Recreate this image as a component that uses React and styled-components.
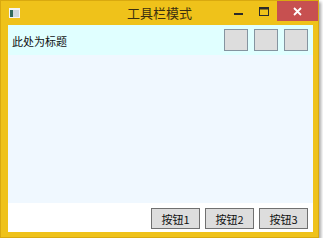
import React from "react";
import styled, { createGlobalStyle } from "styled-components";

const Global = createGlobalStyle`
  html, body { margin: 0; padding: 0; background: #ffffff; }
  body { font-family: "Microsoft YaHei", "Noto Sans CJK SC", sans-serif; }
`;

const Window = styled.div`
  width: 319px;
  height: 238px;
  box-sizing: border-box;
  background: #efc21a;
  border: 1px solid #d9a90f;
  box-shadow: 2px 2px 3px rgba(0,0,0,0.35);
  display: flex;
  flex-direction: column;
`;

const TitleBar = styled.div`
  height: 24px;
  display: flex;
  align-items: flex-start;
  position: relative;
`;

const AppIcon = styled.div`
  width: 9px;
  height: 7px;
  margin: 7px 0 0 8px;
  border: 1px solid #f4f4f4;
  background: linear-gradient(90deg, #2f6a5a 0 3px, #cfd8dc 3px);
  border-top-width: 2px;
`;

const Title = styled.div`
  position: absolute;
  left: 0;
  right: 0;
  top: 3px;
  text-align: center;
  font-family: "Noto Sans CJK SC", sans-serif;
  font-size: 13px;
  line-height: 17px;
  color: #3a2f10;
`;

const Controls = styled.div`
  margin-left: auto;
  display: flex;
  align-items: flex-start;
  position: relative;
  z-index: 1;
`;

const Ctrl = styled.div`
  width: ${(p) => p.w}px;
  height: 20px;
  display: flex;
  align-items: center;
  justify-content: center;
  background: ${(p) => (p.close ? "#c75050" : "transparent")};
`;

const Body = styled.div`
  flex: 1;
  display: flex;
  flex-direction: column;
  margin: 0 5px 5px 7px;
  background: #ffffff;
`;

const Header = styled.div`
  height: 30px;
  background: #e0ffff;
  display: flex;
  align-items: flex-start;
  padding: 4px 5px 0 4px;
  box-sizing: border-box;
`;

const HeaderLabel = styled.div`
  font-family: "Noto Sans CJK SC", sans-serif;
  font-size: 11px;
  color: #111;
  line-height: 14px;
  margin-top: 5px;
  flex: 1;
`;

const ToolRow = styled.div`
  display: flex;
  gap: 6px;
`;

const ToolButton = styled.div`
  width: 24px;
  height: 22px;
  box-sizing: border-box;
  background: #dddddd;
  border: 1px solid #8594a0;
`;

const Main = styled.div`
  flex: 1;
  background: #f0f8ff;
`;

const Footer = styled.div`
  height: 29px;
  display: flex;
  justify-content: flex-end;
  align-items: flex-start;
  gap: 5px;
  padding: 5px 5px 0 0;
  box-sizing: border-box;
  background: #ffffff;
`;

const Button = styled.div`
  width: 49px;
  height: 21px;
  box-sizing: border-box;
  background: #dddddd;
  border: 1px solid #707070;
  display: flex;
  align-items: center;
  justify-content: center;
  font-family: "Noto Sans CJK SC", sans-serif;
  font-size: 11px;
  color: #111;
`;

export default function App() {
  return (
    <>
      <Global />
      <Window>
        <TitleBar>
          <AppIcon />
          <Title>工具栏模式</Title>
          <Controls>
            <Ctrl w={26}>
              <svg width="9" height="9" viewBox="0 0 9 9">
                <rect x="0" y="6" width="9" height="2" fill="#2b2b2b" />
              </svg>
            </Ctrl>
            <Ctrl w={26}>
              <svg width="10" height="9" viewBox="0 0 10 9">
                <rect x="0.5" y="0.5" width="9" height="8" fill="none" stroke="#2b2b2b" />
                <rect x="0" y="0" width="10" height="2.5" fill="#2b2b2b" />
              </svg>
            </Ctrl>
            <Ctrl w={41} close>
              <svg width="9" height="9" viewBox="0 0 9 9">
                <path d="M1 1 L8 8 M8 1 L1 8" stroke="#ffffff" strokeWidth="1.8" />
              </svg>
            </Ctrl>
          </Controls>
        </TitleBar>
        <Body>
          <Header>
            <HeaderLabel>此处为标题</HeaderLabel>
            <ToolRow>
              <ToolButton />
              <ToolButton />
              <ToolButton />
            </ToolRow>
          </Header>
          <Main />
          <Footer>
            <Button>按钮1</Button>
            <Button>按钮2</Button>
            <Button>按钮3</Button>
          </Footer>
        </Body>
      </Window>
    </>
  );
}
